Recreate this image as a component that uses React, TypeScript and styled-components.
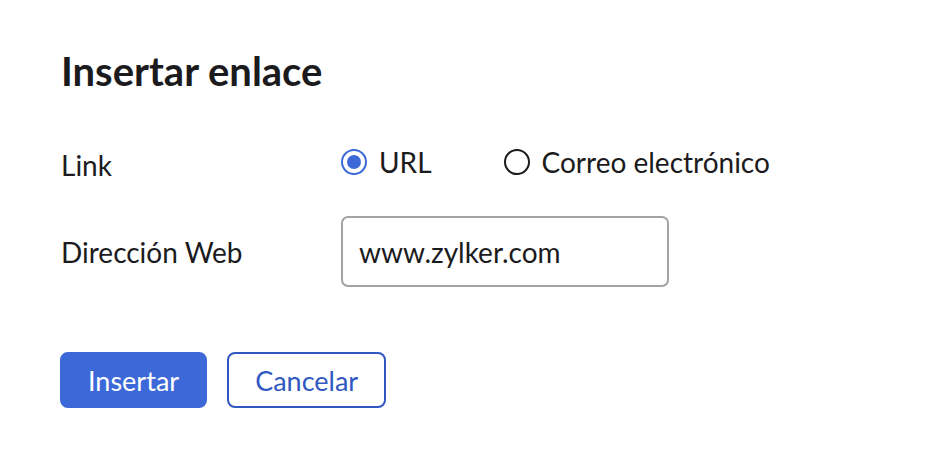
import React, { useState } from "react";
import styled, { createGlobalStyle } from "styled-components";

const GlobalStyle = createGlobalStyle`
  html, body {
    margin: 0;
    padding: 0;
    background: #ffffff;
  }
  body {
    font-family: Lato, "Open Sans", sans-serif;
    color: #1b1b1d;
  }
`;

const Dialog = styled.div`
  width: 950px;
  height: 468px;
  box-sizing: border-box;
  padding: 47px 60px 0 61px;
`;

const Title = styled.h1`
  margin: 0;
  font-size: 40px;
  font-weight: 700;
  line-height: 48px;
  color: #1b1b1d;
`;

const Form = styled.div`
  display: grid;
  grid-template-columns: 280px 1fr;
  grid-template-rows: 36px 71px;
  align-items: center;
  row-gap: 33px;
  margin-top: 52px;
`;

const Label = styled.div`
  font-size: 28px;
  line-height: 36px;
  color: #1b1b1d;
`;

const RadioGroup = styled.div`
  display: flex;
  align-items: center;
  gap: 72px;
  height: 36px;
  margin-bottom: 7px;
`;

const RadioOption = styled.label`
  display: flex;
  align-items: center;
  gap: 12px;
  font-size: 28px;
  line-height: 36px;
  cursor: pointer;
`;

const RadioCircle = styled.span<{ $checked: boolean }>`
  width: 26px;
  height: 26px;
  box-sizing: border-box;
  border-radius: 50%;
  border: 2px solid ${(p) => (p.$checked ? "#3d69d8" : "#1b1b1d")};
  display: flex;
  align-items: center;
  justify-content: center;

  &::after {
    content: "";
    width: 14px;
    height: 14px;
    border-radius: 50%;
    background: #3d69d8;
    display: ${(p) => (p.$checked ? "block" : "none")};
  }
`;

const TextInput = styled.input`
  width: 328px;
  height: 71px;
  box-sizing: border-box;
  border: 2px solid #a3a3a6;
  border-radius: 7px;
  padding: 0 16px;
  font-family: Lato, sans-serif;
  font-size: 28px;
  color: #1b1b1d;
  outline: none;
`;

const Actions = styled.div`
  display: flex;
  gap: 20px;
  margin-top: 65px;
  margin-left: -1px;
`;

const Button = styled.button<{ $primary?: boolean }>`
  height: 56px;
  box-sizing: border-box;
  padding: 0 26px;
  border-radius: 8px;
  font-family: Lato, sans-serif;
  font-size: 27px;
  border: 2px solid ${(p) => (p.$primary ? "#3d69d8" : "#2f58c0")};
  background: ${(p) => (p.$primary ? "#3d69d8" : "#ffffff")};
  color: ${(p) => (p.$primary ? "#ffffff" : "#2f58c0")};
  cursor: pointer;
`;

export default function App() {
  const [kind, setKind] = useState<"url" | "email">("url");
  const [value, setValue] = useState("www.zylker.com");

  return (
    <>
      <GlobalStyle />
      <Dialog>
        <Title>Insertar enlace</Title>
        <Form>
          <Label>Link</Label>
          <RadioGroup>
            <RadioOption onClick={() => setKind("url")}>
              <RadioCircle $checked={kind === "url"} />
              URL
            </RadioOption>
            <RadioOption onClick={() => setKind("email")}>
              <RadioCircle $checked={kind === "email"} />
              Correo electrónico
            </RadioOption>
          </RadioGroup>
          <Label>Dirección Web</Label>
          <TextInput value={value} onChange={(e) => setValue(e.target.value)} />
        </Form>
        <Actions>
          <Button $primary>Insertar</Button>
          <Button>Cancelar</Button>
        </Actions>
      </Dialog>
    </>
  );
}
